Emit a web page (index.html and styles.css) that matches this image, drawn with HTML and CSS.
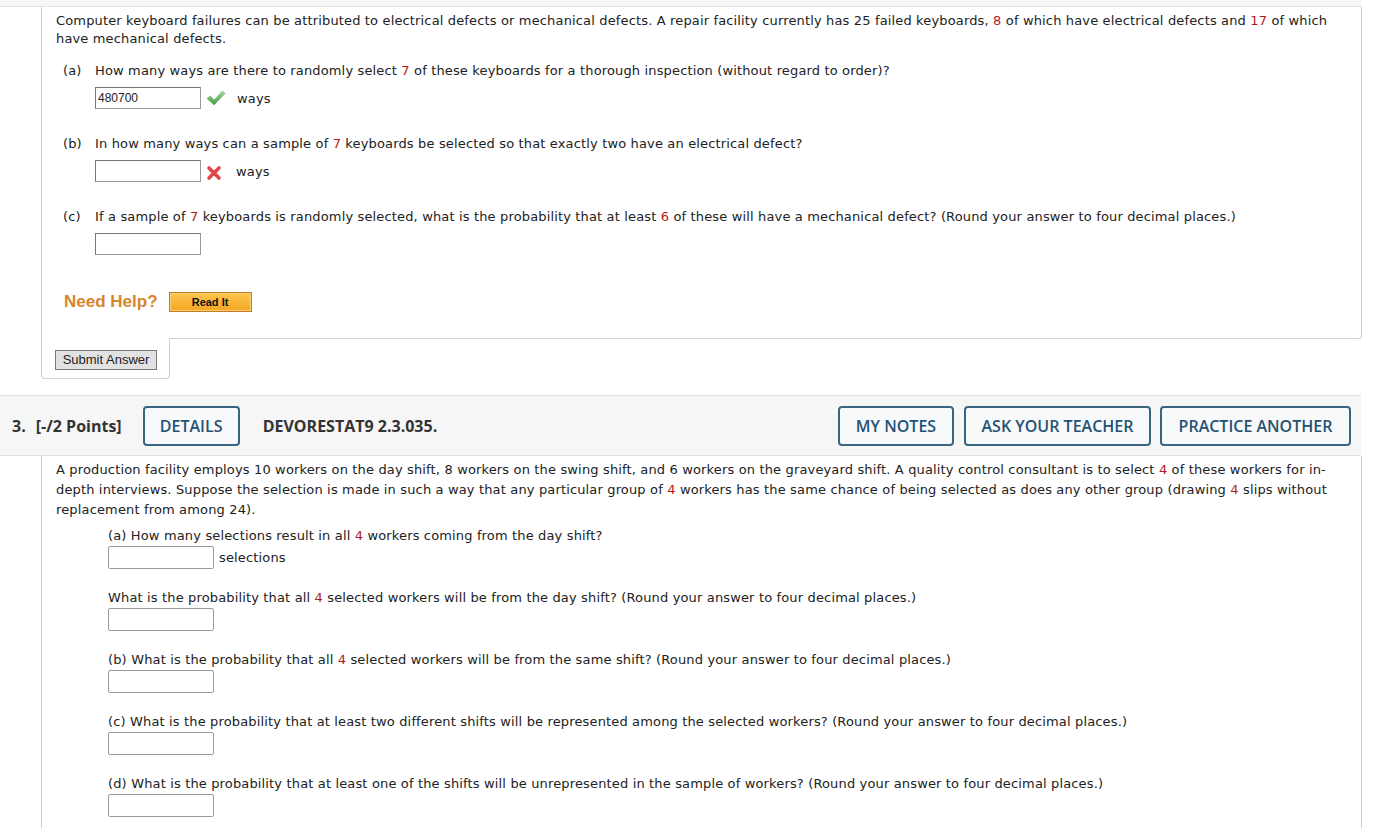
FILE: index.html
```html
<!DOCTYPE html>
<html>
<head>
<meta charset="utf-8">
<link rel="stylesheet" href="styles.css">
</head>
<body>
<div class="page">
  <div class="q-header q-header-stub"></div>
  <div class="q-body q2">
    <p class="intro">Computer keyboard failures can be attributed to electrical defects or mechanical defects. A repair facility currently has 25 failed keyboards, <span class="num">8</span> of which have electrical defects and <span class="num">17</span> of which have mechanical defects.</p>

    <div class="part">
      <div class="part-q"><span class="lbl">(a)</span><span>How many ways are there to randomly select <span class="num">7</span> of these keyboards for a thorough inspection (without regard to order)?</span></div>
      <div class="ans">
        <span class="field filled">480700</span>
        <svg class="mark" width="20" height="18" viewBox="0 0 20 18"><defs><linearGradient id="g" x1="0" y1="0" x2="0" y2="1"><stop offset="0" stop-color="#a6dba0"/><stop offset="1" stop-color="#3f9a3b"/></linearGradient></defs><path d="M1 9.5 L4.5 7 L8 11 L16.5 2 L19 4.5 L8 16 Z" fill="url(#g)" stroke="#6aa766" stroke-width="0.6"/></svg>
        <span class="unit ways">ways</span>
      </div>
    </div>

    <div class="part">
      <div class="part-q"><span class="lbl">(b)</span><span>In how many ways can a sample of <span class="num">7</span> keyboards be selected so that exactly two have an electrical defect?</span></div>
      <div class="ans">
        <span class="field"></span>
        <svg class="mark x" width="16" height="16" viewBox="0 0 16 16"><path d="M3 3 L13 13 M13 3 L3 13" stroke="#e2454a" stroke-width="3.6" stroke-linecap="round"/></svg>
        <span class="unit ways2">ways</span>
      </div>
    </div>

    <div class="part">
      <div class="part-q"><span class="lbl">(c)</span><span>If a sample of <span class="num">7</span> keyboards is randomly selected, what is the probability that at least <span class="num">6</span> of these will have a mechanical defect? (Round your answer to four decimal places.)</span></div>
      <div class="ans">
        <span class="field"></span>
      </div>
    </div>

    <div class="help">
      <span class="need">Need Help?</span>
      <span class="readit">Read It</span>
    </div>
  </div>
  <div class="submit-tab"><span class="submit">Submit Answer</span></div>

  <div class="q-header">
    <div class="hleft">
      <span class="qnum">3.</span>
      <span class="pts">[-/2 Points]</span>
      <span class="hbtn details">DETAILS</span>
      <span class="code">DEVORESTAT9 2.3.035.</span>
    </div>
    <div class="hright">
      <span class="hbtn notes">MY NOTES</span>
      <span class="hbtn ask">ASK YOUR TEACHER</span>
      <span class="hbtn practice">PRACTICE ANOTHER</span>
    </div>
  </div>
  <div class="q-body q3">
    <p class="intro3">A production facility employs 10 workers on the day shift, 8 workers on the swing shift, and 6 workers on the graveyard shift. A quality control consultant is to select <span class="num">4</span> of these workers for in-depth interviews. Suppose the selection is made in such a way that any particular group of <span class="num">4</span> workers has the same chance of being selected as does any other group (drawing <span class="num">4</span> slips without replacement from among 24).</p>
    <div class="sub first">
      <div class="sq">(a) How many selections result in all <span class="num">4</span> workers coming from the day shift?</div>
      <div class="sa"><span class="field f3"></span><span class="unit sel">selections</span></div>
    </div>
    <div class="sub">
      <div class="sq">What is the probability that all <span class="num">4</span> selected workers will be from the day shift? (Round your answer to four decimal places.)</div>
      <div class="sa"><span class="field f3"></span></div>
    </div>
    <div class="sub">
      <div class="sq">(b) What is the probability that all <span class="num">4</span> selected workers will be from the same shift? (Round your answer to four decimal places.)</div>
      <div class="sa"><span class="field f3"></span></div>
    </div>
    <div class="sub">
      <div class="sq">(c) What is the probability that at least two different shifts will be represented among the selected workers? (Round your answer to four decimal places.)</div>
      <div class="sa"><span class="field f3"></span></div>
    </div>
    <div class="sub">
      <div class="sq">(d) What is the probability that at least one of the shifts will be unrepresented in the sample of workers? (Round your answer to four decimal places.)</div>
      <div class="sa"><span class="field f3"></span></div>
    </div>
  </div>
</div>
</body>
</html>
```

FILE: styles.css
```css
html, body {
  margin: 0;
  padding: 0;
  background: #fff;
}
body {
  font-family: "DejaVu Sans", Verdana, sans-serif;
  font-size: 13px;
  letter-spacing: 0.15px;
  color: #222;
  overflow: hidden;
}
.page {
  width: 1361px;
}
.num { color: #b01c1c; }

.q-header {
  box-sizing: border-box;
  width: 1361px;
  height: 61px;
  background: #f6f6f6;
  border-top: 1px solid #e2e2e2;
  border-bottom: 1px solid #e2e2e2;
  display: flex;
  align-items: center;
  justify-content: space-between;
  padding: 0 10px 0 12px;
  font-family: "Open Sans", sans-serif;
  letter-spacing: 0;
}
.q-header-stub {
  height: 7px;
  border-top: none;
  padding: 0;
}
.q-body {
  box-sizing: border-box;
  margin-left: 41px;
  width: 1321px;
  border-left: 1px solid #d0d0d0;
  border-right: 1px solid #d0d0d0;
  padding-left: 14px;
}
.q2 {
  border-bottom: 1px solid #d0d0d0;
  border-bottom-right-radius: 3px;
  padding-top: 5px;
  padding-bottom: 26px;
  padding-right: 14px;
}
.intro {
  margin: 0;
  line-height: 18px;
}
.part { margin-top: 14px; }
.part + .part { margin-top: 26px; }
.part-q {
  display: flex;
  line-height: 18px;
  padding-left: 7px;
}
.lbl { width: 32px; flex: none; }
.ans {
  display: flex;
  align-items: center;
  margin-top: 7px;
  margin-left: 39px;
  height: 22px;
}
.field {
  box-sizing: border-box;
  display: inline-block;
  width: 106px;
  height: 22px;
  border: 1px solid #9a9a9a;
  border-top-color: #777;
  border-left-color: #777;
  background: #fff;
  font-family: "Liberation Sans", Arial, sans-serif;
  font-size: 12px;
  letter-spacing: 0;
  line-height: 20px;
  padding-left: 2px;
  color: #222;
}
.mark { margin-left: 5px; flex: none; }
.mark.x { margin-left: 5px; margin-top: 3px; }
.unit { margin-left: 11px; }
.ways2 { margin-left: 14px; }

.help {
  display: flex;
  align-items: center;
  margin-top: 37px;
  margin-left: 8px;
  height: 20px;
}
.need {
  font-family: "Liberation Sans", Arial, sans-serif;
  font-weight: bold;
  font-size: 17px;
  letter-spacing: 0;
  color: #d6862a;
}
.readit {
  box-sizing: border-box;
  margin-left: 11px;
  width: 83px;
  height: 20px;
  border: 1px solid #c77a1c;
  background: linear-gradient(#fcc64e, #f5a623);
  box-shadow: inset 0 0 0 1px #fbd27a;
  font-family: "Liberation Sans", Arial, sans-serif;
  font-weight: bold;
  font-size: 11px;
  letter-spacing: 0;
  color: #111;
  text-align: center;
  line-height: 18px;
}

.submit-tab {
  box-sizing: border-box;
  margin-left: 41px;
  margin-top: -1px;
  width: 129px;
  height: 41px;
  background: #fff;
  border: 1px solid #d0d0d0;
  border-top: none;
  border-radius: 0 0 4px 4px;
  padding: 12px 0 0 13px;
  margin-bottom: 16px;
}
.submit {
  box-sizing: border-box;
  display: inline-block;
  width: 102px;
  height: 20px;
  background: #e2e2e2;
  border: 1px solid #777;
  font-family: "Liberation Sans", Arial, sans-serif;
  font-size: 13px;
  letter-spacing: 0;
  line-height: 18px;
  text-align: center;
  color: #222;
}

.hleft, .hright {
  display: flex;
  align-items: center;
}
.hright { gap: 9px; }
.qnum, .pts, .code {
  font-weight: 700;
  font-size: 16px;
  color: #333;
}
.qnum { margin-right: 10px; }
.pts { margin-right: 21px; }
.code { margin-left: 23px; }
.hbtn {
  box-sizing: border-box;
  height: 40px;
  display: inline-flex;
  align-items: center;
  justify-content: center;
  padding: 0 10px;
  border: 2px solid #3a6580;
  border-radius: 4px;
  color: #245274;
  font-size: 16px;
  font-weight: 600;
  background: #f8f9fa;
}
.details { width: 97px; }
.notes { width: 116px; margin-right: 1px; }
.ask { width: 187px; }
.practice { width: 191px; }

.q3 {
  padding-top: 4px;
  padding-bottom: 20px;
  padding-right: 14px;
}
.intro3 {
  margin: 0;
  line-height: 20px;
}
.sub {
  margin-left: 52px;
  margin-top: 20px;
}
.sub.first { margin-top: 7px; }
.sq { line-height: 18px; }
.sa {
  display: flex;
  align-items: center;
  margin-top: 1px;
}
.f3 {
  width: 106px;
  height: 23px;
  border: 1px solid #9a9a9a;
  border-radius: 2px;
}
.sel { margin-left: 5px; margin-top: -1px; }
```
